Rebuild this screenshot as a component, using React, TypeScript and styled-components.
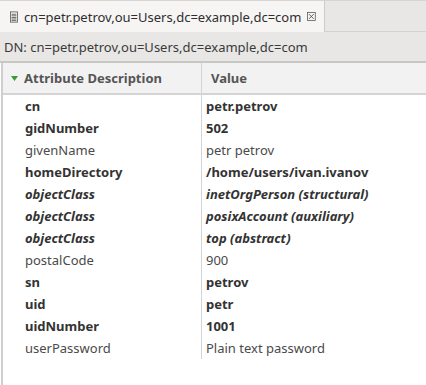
import styled, { createGlobalStyle } from "styled-components";

const GlobalStyle = createGlobalStyle`
  html, body {
    margin: 0;
    padding: 0;
    background: #ffffff;
  }
  body {
    font-family: "Noto Sans", "Open Sans", sans-serif;
    font-size: 13px;
    color: #3c3c3c;
  }
`;

const Frame = styled.div`
  width: 426px;
  height: 385px;
  display: flex;
  flex-direction: column;
  overflow: hidden;
`;

const TabBar = styled.div`
  height: 32px;
  display: flex;
  background: #e8e7e5;
  border-top: 1px solid #d8d5d1;
  box-sizing: border-box;
  border-bottom: 1px solid #d4d2cf;
`;

const Tab = styled.div`
  display: flex;
  align-items: center;
  gap: 6px;
  padding: 0 8px 0 10px;
  width: 325px;
  box-sizing: border-box;
  background: #f6f5f4;
  border-right: 1px solid #cfccc8;
  margin-bottom: -1px;
  color: #2e2e2e;
  white-space: nowrap;
`;

const TabTitle = styled.span`
  flex: 1;
`;

const DnBar = styled.div`
  height: 31px;
  display: flex;
  align-items: center;
  padding-left: 4px;
  background: #e8e7e5;
  border-bottom: 2px solid #c9c7c4;
  box-sizing: border-box;
  color: #3a3a3a;
  white-space: nowrap;
`;

const TableArea = styled.div`
  flex: 1;
  border-left: 2px solid #cfcfcf;
  margin-left: 1px;
`;

const Grid = styled.div`
  display: grid;
  grid-template-columns: 199px 1fr;
`;

const HeadCell = styled.div<{ $first?: boolean }>`
  height: 32px;
  box-sizing: border-box;
  display: flex;
  align-items: center;
  gap: 6px;
  padding-left: ${(p) => (p.$first ? "8px" : "9px")};
  background: #f2f2f2;
  border-bottom: 2px solid #d4d4d4;
  border-right: ${(p) => (p.$first ? "1px solid #d4d4d4" : "none")};
  font-weight: 700;
  color: #555555;
`;

const Cell = styled.div<{ $first?: boolean; $bold?: boolean; $italic?: boolean }>`
  height: 22px;
  display: flex;
  align-items: center;
  padding-left: ${(p) => (p.$first ? "22px" : "4px")};
  border-right: ${(p) => (p.$first ? "1px solid #d4d4d4" : "none")};
  font-weight: ${(p) => (p.$bold ? 700 : 400)};
  font-style: ${(p) => (p.$italic ? "italic" : "normal")};
  color: ${(p) => (p.$bold ? "#333333" : "#4a4a4a")};
  white-space: nowrap;
`;

const DocIcon = () => (
  <svg width="10" height="14" viewBox="0 0 10 14">
    <rect x="0.5" y="0.5" width="9" height="13" fill="#eeeeec" stroke="#555753" />
    <rect x="2" y="3" width="6" height="1" fill="#555753" />
    <rect x="2" y="5" width="6" height="1" fill="#555753" />
    <rect x="2" y="7" width="6" height="1" fill="#555753" />
    <rect x="2" y="9" width="6" height="1" fill="#555753" />
    <rect x="2" y="11" width="6" height="1" fill="#555753" />
  </svg>
);

const CloseIcon = () => (
  <svg width="11" height="11" viewBox="0 0 11 11">
    <rect x="0.5" y="0.5" width="10" height="10" fill="none" stroke="#5a5a5a" />
    <path d="M2.5 2.5 L8.5 8.5 M8.5 2.5 L2.5 8.5" stroke="#5a5a5a" strokeWidth="1.2" />
  </svg>
);

const SortArrow = () => (
  <svg width="7" height="5" viewBox="0 0 7 5">
    <path d="M0 0 H7 L3.5 5 Z" fill="#3a9a3a" />
  </svg>
);

type Row = { name: string; value: string; bold?: boolean; italic?: boolean };

const rows: Row[] = [
  { name: "cn", value: "petr.petrov", bold: true },
  { name: "gidNumber", value: "502", bold: true },
  { name: "givenName", value: "petr petrov" },
  { name: "homeDirectory", value: "/home/users/ivan.ivanov", bold: true },
  { name: "objectClass", value: "inetOrgPerson (structural)", bold: true, italic: true },
  { name: "objectClass", value: "posixAccount (auxiliary)", bold: true, italic: true },
  { name: "objectClass", value: "top (abstract)", bold: true, italic: true },
  { name: "postalCode", value: "900" },
  { name: "sn", value: "petrov", bold: true },
  { name: "uid", value: "petr", bold: true },
  { name: "uidNumber", value: "1001", bold: true },
  { name: "userPassword", value: "Plain text password" },
];

const dn = "cn=petr.petrov,ou=Users,dc=example,dc=com";

export default function App() {
  return (
    <Frame>
      <GlobalStyle />
      <TabBar>
        <Tab>
          <DocIcon />
          <TabTitle>{dn}</TabTitle>
          <CloseIcon />
        </Tab>
      </TabBar>
      <DnBar>DN: {dn}</DnBar>
      <TableArea>
        <Grid>
          <HeadCell $first>
            <SortArrow />
            Attribute Description
          </HeadCell>
          <HeadCell>Value</HeadCell>
          {rows.flatMap((r, i) => [
            <Cell key={`n${i}`} $first $bold={r.bold} $italic={r.italic}>
              {r.name}
            </Cell>,
            <Cell key={`v${i}`} $bold={r.bold} $italic={r.italic}>
              {r.value}
            </Cell>,
          ])}
        </Grid>
      </TableArea>
    </Frame>
  );
}
